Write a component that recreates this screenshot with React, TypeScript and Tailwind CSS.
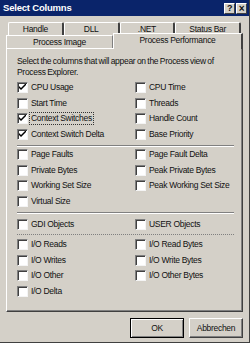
import React from "react"

type Item = { label: string; checked?: boolean; focus?: boolean }

const groups: { left: Item[]; right: Item[]; sep: string }[] = [
  {
    left: [
      { label: "CPU Usage", checked: true },
      { label: "Start Time" },
      { label: "Context Switches", checked: true, focus: true },
      { label: "Context Switch Delta", checked: true },
    ],
    right: [{ label: "CPU Time" }, { label: "Threads" }, { label: "Handle Count" }, { label: "Base Priority" }],
    sep: "mt-[3px] mb-0 border-t border-t-[#808080] border-b border-b-white",
  },
  {
    left: [{ label: "Page Faults" }, { label: "Private Bytes" }, { label: "Working Set Size" }, { label: "Virtual Size" }],
    right: [{ label: "Page Fault Delta" }, { label: "Peak Private Bytes" }, { label: "Peak Working Set Size" }],
    sep: "mt-[3px] mb-[3px] border-t border-t-[#808080] border-b border-b-white",
  },
  {
    left: [{ label: "GDI Objects" }],
    right: [{ label: "USER Objects" }],
    sep: "mt-[1.5px] mb-[2px] border-t border-dotted border-t-[#808080]",
  },
  {
    left: [{ label: "I/O Reads" }, { label: "I/O Writes" }, { label: "I/O Other" }, { label: "I/O Delta" }],
    right: [{ label: "I/O Read Bytes" }, { label: "I/O Write Bytes" }, { label: "I/O Other Bytes" }],
    sep: "",
  },
]

const Check = ({ item }: { item: Item }) => (
  <div className="flex items-center h-[15.5px] whitespace-nowrap">
    <span className="w-[11px] h-[11px] shrink-0 bg-white border-t border-l border-t-[#808080] border-l-[#808080] border-b border-r border-b-[#f4f4f4] border-r-[#f4f4f4] shadow-[inset_1px_1px_0_#404040] flex items-center justify-center">
      {item.checked && (
        <svg width="7" height="7" viewBox="0 0 7 7">
          <path d="M0 2 L0 4 L2 6 L7 1 L7 -1 L2 4 Z" fill="#000" />
        </svg>
      )}
    </span>
    <span
      className={
        "ml-[1px] px-[1px] leading-[11px] " +
        (item.focus ? "border border-dotted border-[#333]" : "border border-transparent")
      }
    >
      {item.label}
    </span>
  </div>
)

export default function App() {
  return (
    <div
      className="w-[250px] h-[343px] bg-[#d4d0c8] text-[8.5px] tracking-[-0.3px] text-[#111] flex flex-col overflow-hidden border-r border-b border-r-[#404040] border-b-[#404040]"
      style={{ fontFamily: '"Liberation Sans", Arial, sans-serif' }}
    >
      {/* Title bar */}
      <div className="h-[16px] bg-[#0a246a] flex items-center justify-between pl-[3px] pr-[2px]">
        <span className="text-white font-bold text-[9.5px] tracking-[-0.2px]">Select Columns</span>
        <div className="flex gap-[1px]">
          <span className="w-[11px] h-[11px] bg-[#d4d0c8] border border-t-white border-l-white border-b-[#404040] border-r-[#404040] text-[9px] font-bold leading-[9px] flex items-center justify-center">?</span>
          <span className="w-[11px] h-[11px] bg-[#d4d0c8] border border-t-white border-l-white border-b-[#404040] border-r-[#404040] text-[10px] font-bold leading-[9px] flex items-center justify-center">×</span>
        </div>
      </div>

      <div className="flex-1 flex flex-col px-[6px] pt-[6px] whitespace-nowrap">
        {/* Back tab row */}
        <div className="flex h-[13px] ml-[2px] mr-[2px]">
          {["Handle", "DLL", ".NET", "Status Bar"].map((t, i) => (
            <div
              key={t}
              className={
                "h-[13px] flex items-center justify-center border-t border-l border-t-white border-l-white border-r-2 border-r-[#404040] rounded-t-[2px] " +
                (i === 3 ? "w-[66px]" : "w-[56px]")
              }
            >
              {t}
            </div>
          ))}
        </div>
        {/* Front tab row */}
        <div className="flex h-[13px] items-end">
          <div className="w-[107px] h-[13px] flex items-center justify-center border-t border-l border-t-white border-l-white border-r border-r-[#808080]">
            Process Image
          </div>
          <div className="flex-1 h-[16px] -mb-[1px] relative z-10 bg-[#d4d0c8] flex items-center justify-center pb-[2px] border-t border-l border-t-white border-l-white border-r-2 border-r-[#404040]">
            Process Performance
          </div>
        </div>

        {/* Panel */}
        <div className="h-[264px] border-t border-l border-t-white border-l-white border-r border-b border-r-[#404040] border-b-[#404040] shadow-[inset_-1px_-1px_0_#808080] pl-[10px] pr-[6px] pt-[7px]">
          <p className="leading-[11px] [word-spacing:-0.5px]">
            Select the columns that will appear on the Process view of
            <br />
            Process Explorer.
          </p>
          <div className="mt-[2px]">
            {groups.map((g, gi) => (
              <div key={gi}>
                <div className="flex">
                  <div className="w-[118px] shrink-0 flex flex-col">
                    {g.left.map((it) => (
                      <Check key={it.label} item={it} />
                    ))}
                  </div>
                  <div className="flex flex-col">
                    {g.right.map((it) => (
                      <Check key={it.label} item={it} />
                    ))}
                  </div>
                </div>
                {g.sep && <div className={"mr-[2px] " + g.sep} />}
              </div>
            ))}
          </div>
        </div>

        {/* Buttons */}
        <div className="flex justify-end gap-[5px] mt-[6px]">
          <button className="w-[54px] h-[20px] bg-[#d4d0c8] border border-black shadow-[inset_1px_1px_0_#fff,inset_-1px_-1px_0_#808080] text-[8.5px]">
            OK
          </button>
          <button className="w-[54px] h-[20px] bg-[#d4d0c8] border border-t-white border-l-white border-b-[#404040] border-r-[#404040] shadow-[inset_-1px_-1px_0_#808080] text-[8.5px]">
            Abbrechen
          </button>
        </div>
      </div>
    </div>
  )
}
